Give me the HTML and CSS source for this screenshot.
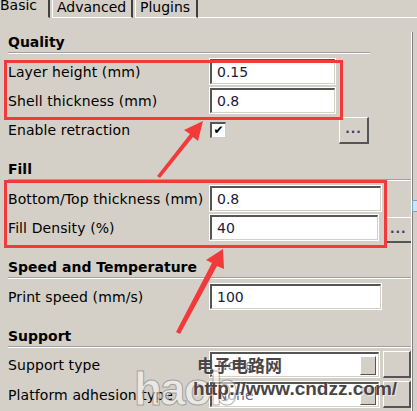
FILE: index.html
```html
<!DOCTYPE html>
<html>
<head>
<meta charset="utf-8">
<link rel="stylesheet" href="styles.css">
</head>
<body>
<div class="window">
  <div class="tabs">
    <div class="tab active">Basic</div>
    <div class="tab">Advanced</div>
    <div class="tab">Plugins</div>
    <div class="tab-fill"></div>
  </div>
  <div class="panel">
    <div class="head head-q">Quality</div>
    <div class="rows">
      <div class="row"><span class="label">Layer height (mm)</span><span class="input short">0.15</span></div>
      <div class="row"><span class="label">Shell thickness (mm)</span><span class="input short">0.8</span></div>
      <div class="row tall"><span class="label">Enable retraction</span><span class="check-cell"><span class="check">&#10004;</span></span><span class="btn btn-q">...</span></div>
    </div>

    <div class="head head-f">Fill</div>
    <div class="rows">
      <div class="row"><span class="label">Bottom/Top thickness (mm)</span><span class="input">0.8</span></div>
      <div class="row tall2"><span class="label">Fill Density (%)</span><span class="input">40</span><span class="btn btn-edge">...</span></div>
    </div>

    <div class="head head-s">Speed and Temperature</div>
    <div class="rows">
      <div class="row"><span class="label">Print speed (mm/s)</span><span class="input">100</span></div>
    </div>

    <div class="head head-s2">Support</div>
    <div class="rows rows-sup">
      <div class="row"><span class="label">Support type</span><span class="input select"><span class="sel-text">None</span><span class="drop"></span></span><span class="btn btn-side"></span></div>
      <div class="row"><span class="label">Platform adhesion type</span><span class="input select"><span class="sel-text">None</span><span class="drop"></span></span><span class="btn btn-side"></span></div>
    </div>
  </div>
  <div class="scroll-mark"></div>

  <div class="box box1"></div>
  <div class="box box2"></div>
  <svg class="arrows" width="417" height="411" viewBox="0 0 417 411">
    <path d="M157 176 L190 134 L184 130 L203 121 L198 141 L193 137 L160 178 Z" fill="#f23a3a"/>
    <path d="M176 332 L212 263 L206 260 L223 249 L224 269 L217 266 L180 334 Z" fill="#f23a3a"/>
  </svg>
  <div class="wm wm-hao">haob</div>
  <div class="wm wm-cn">电子电路网</div>
  <div class="wm wm-url">http://www.cndzz.com/</div>
</div>
</body>
</html>
```
FILE: styles.css
```css
html, body {
  margin: 0;
  padding: 0;
}
body {
  background: #d4d0c8;
  font-family: "DejaVu Sans", Verdana, sans-serif;
  font-size: 14px;
  color: #000;
}
.window {
  position: relative;
  width: 417px;
  height: 411px;
  overflow: hidden;
}
.tabs {
  display: flex;
  height: 18px;
  align-items: stretch;
}
.tab {
  padding: 0 6px 0 4px;
  line-height: 17px;
  font-size: 14px;
  border-top: 1px solid #fff;
  border-left: 1px solid #fff;
  border-right: 2px solid #404040;
  border-bottom: 1px solid #fff;
  margin-left: 2px;
  margin-top: -2px;
}
.tab.active {
  margin-left: 0;
  padding-left: 0;
  border-left: none;
  border-top: none;
  border-bottom: 1px solid transparent;
  width: 42px;
  margin-top: -3px;
}
.tab:nth-child(2) { width: 68px; }
.tab:nth-child(3) { width: 50px; }
.tab-fill {
  flex: 1;
  border-bottom: 1px solid #fff;
}
.panel {
  width: 412px;
  border-right: 1px solid #fff;
  box-shadow: 1px 0 0 #808080;
  height: 393px;
  padding-left: 8px;
  box-sizing: border-box;
}
.head {
  font-weight: bold;
  font-size: 14px;
  height: 20px;
  line-height: 20px;
  border-bottom: 1px solid #a0a0a0;
  box-shadow: 0 1px 0 #fff;
}
.head-q { margin-top: 14px; margin-right: 41px; }
.head-f { margin-top: 16px; }
.head-s { margin-top: 17px; }
.head-s2 { margin-top: 17px; }
.rows {
  display: flex;
  flex-direction: column;
  gap: 4px;
  margin-top: 6px;
}
.row {
  display: flex;
  align-items: center;
  height: 25px;
}
.row.tall { height: 26px; }
.label {
  width: 202px;
  flex: none;
  white-space: nowrap;
  font-size: 14px;
  letter-spacing: 0.1px;
}
.input {
  position: relative;
  height: 25px;
  box-sizing: border-box;
  width: 171px;
  background: #fff;
  border-top: 2px solid #555;
  border-left: 2px solid #555;
  border-right: 1px solid #d4d0c8;
  border-bottom: 1px solid #d4d0c8;
  box-shadow: 0 0 0 1px #fff;
  padding-left: 5px;
  line-height: 22px;
  font-size: 14px;
  color: #1a1a3a;
}
.input.short { width: 125px; }
.check-cell {
  width: 129px;
  flex: none;
  display: flex;
  align-items: center;
}
.check {
  width: 16px;
  height: 16px;
  box-sizing: border-box;
  background: #fff;
  border-top: 2px solid #555;
  border-left: 2px solid #555;
  border-right: 1px solid #ccc;
  border-bottom: 1px solid #ccc;
  font-size: 12px;
  line-height: 13px;
  text-align: center;
  font-weight: bold;
}
.btn {
  box-sizing: border-box;
  background: #d4d0c8;
  border-top: 1px solid #fff;
  border-left: 1px solid #fff;
  border-right: 2px solid #555;
  border-bottom: 2px solid #555;
  font-size: 12px;
  font-weight: bold;
  color: #403a6a;
  text-align: center;
  letter-spacing: 1px;
}
.btn-q {
  width: 30px;
  height: 27px;
  line-height: 22px;
  margin-top: 1px;
}
.btn-edge {
  width: 27px;
  height: 26px;
  line-height: 22px;
  margin-left: 7px;
  border-left-color: #d4d0c8;
  border-right: none;
  margin-top: 4px;
}
.btn-side {
  width: 28px;
  height: 27px;
  margin-left: 4px;
}
.rows-sup { gap: 5px; margin-top: 5px; }
.sel-text { color: #6a6a90; }
.drop {
  position: absolute;
  right: 2px;
  top: 2px;
  width: 14px;
  height: 17px;
  background: #d4d0c8;
  border-top: 1px solid #fff;
  border-left: 1px solid #fff;
  border-right: 1px solid #555;
  border-bottom: 1px solid #555;
}
.scroll-mark {
  position: absolute;
  left: 412px;
  top: 200px;
  width: 4px;
  height: 10px;
  background: #cfe3f5;
  border: 1px solid #7aa3c8;
}
.box {
  position: absolute;
  border: 3px solid #f23a3a;
  box-sizing: border-box;
}
.box1 { left: 4px; top: 60px; width: 339px; height: 60px; }
.box2 { left: 4px; top: 180px; width: 383px; height: 68px; }
.arrows {
  position: absolute;
  left: 0;
  top: 0;
}
.wm {
  position: absolute;
  white-space: nowrap;
  font-family: "Liberation Sans", Arial, sans-serif;
  font-weight: bold;
}
.wm-hao {
  left: 134px;
  top: 362px;
  font-size: 46px;
  color: rgba(255,255,255,0.55);
  -webkit-text-stroke: 1px rgba(120,120,120,0.6);
  letter-spacing: -2px;
}
.wm-cn {
  left: 197px;
  top: 355px;
  font-family: "Noto Sans CJK SC", sans-serif;
  font-size: 17px;
  line-height: 20px;
  color: #4a4545;
  text-shadow: 1px 1px 0 rgba(255,255,255,0.6);
}
.wm-url {
  left: 193px;
  top: 379px;
  font-size: 19px;
  line-height: 20px;
  color: #4a4545;
  text-shadow: 1px 1px 0 rgba(255,255,255,0.6);
}
```
